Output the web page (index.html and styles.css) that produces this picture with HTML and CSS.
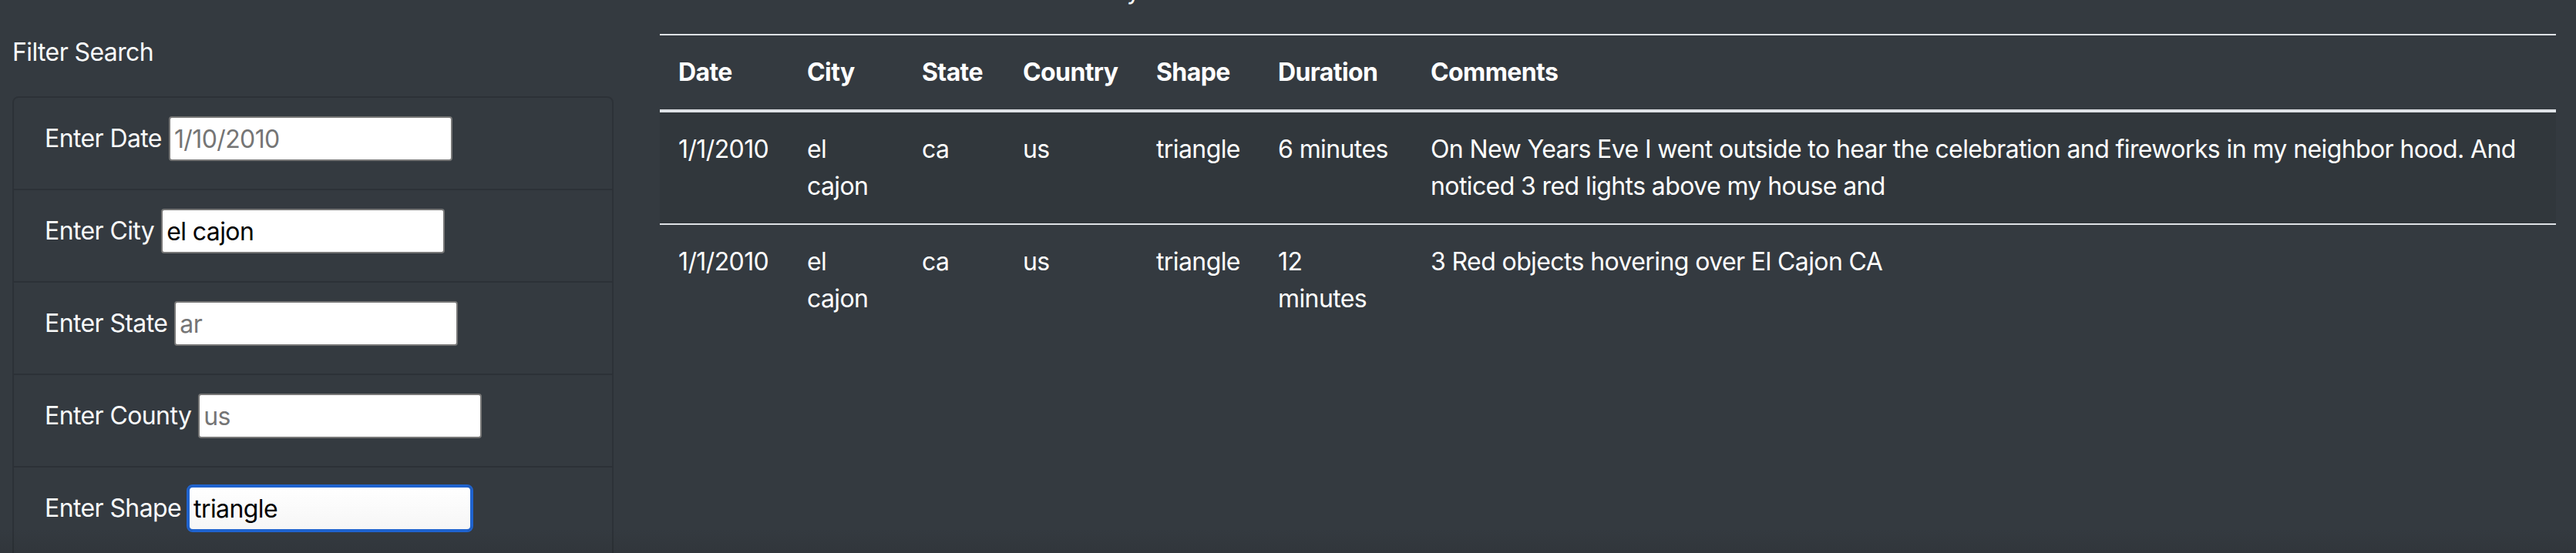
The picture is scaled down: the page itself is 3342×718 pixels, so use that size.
FILE: index.html
```html
<!DOCTYPE html>
<html lang="en">
<head>
<meta charset="utf-8">
<title>UFO Sightings</title>
<link rel="stylesheet" href="styles.css">
</head>
<body>
<div class="page">
  <aside class="filters">
    <div class="filters-title">Filter Search</div>
    <ul class="filter-list">
      <li class="filter-item">
        <label class="filter-row"><span class="filter-label">Enter Date</span><input class="filter-input" type="text" placeholder="1/10/2010"></label>
      </li>
      <li class="filter-item">
        <label class="filter-row"><span class="filter-label">Enter City</span><input class="filter-input" type="text" value="el cajon"></label>
      </li>
      <li class="filter-item">
        <label class="filter-row"><span class="filter-label">Enter State</span><input class="filter-input" type="text" placeholder="ar"></label>
      </li>
      <li class="filter-item">
        <label class="filter-row"><span class="filter-label">Enter County</span><input class="filter-input" type="text" placeholder="us"></label>
      </li>
      <li class="filter-item">
        <label class="filter-row"><span class="filter-label">Enter Shape</span><input class="filter-input is-focused" type="text" value="triangle"></label>
      </li>
    </ul>
  </aside>
  <main class="results">
    <p class="intro">Search the data for any field</p>
    <table class="data-table">
      <colgroup>
        <col class="col-date">
        <col class="col-city">
        <col class="col-state">
        <col class="col-country">
        <col class="col-shape">
        <col class="col-duration">
        <col class="col-comments">
      </colgroup>
      <thead>
        <tr>
          <th>Date</th>
          <th>City</th>
          <th>State</th>
          <th>Country</th>
          <th>Shape</th>
          <th>Duration</th>
          <th>Comments</th>
        </tr>
      </thead>
      <tbody>
        <tr>
          <td>1/1/2010</td>
          <td>el cajon</td>
          <td>ca</td>
          <td>us</td>
          <td>triangle</td>
          <td>6 minutes</td>
          <td>On New Years Eve I went outside to hear the celebration and fireworks in my neighbor hood. And noticed 3 red lights above my house and</td>
        </tr>
        <tr>
          <td>1/1/2010</td>
          <td>el cajon</td>
          <td>ca</td>
          <td>us</td>
          <td>triangle</td>
          <td>12 minutes</td>
          <td>3 Red objects hovering over El Cajon CA</td>
        </tr>
      </tbody>
    </table>
  </main>
</div>
</body>
</html>
```

FILE: styles.css
```css
html {
  height: 100%;
  background: #343a40;
}

body {
  margin: 0;
  min-height: 100%;
  font-family: Inter, "Noto Sans", sans-serif;
  font-size: 32px;
  line-height: 48px;
  letter-spacing: -0.6px;
  color: #fff;
  background: linear-gradient(to bottom, #343a40 0, #343a40 calc(100% - 40px), #30353a 100%);
  overflow: hidden;
}

.page {
  display: flex;
  gap: 60px;
  padding: 44px 26px 0 16px;
}

.filters {
  flex: none;
  width: 780px;
}

.filters-title {
  line-height: 48px;
  margin-bottom: 33px;
  color: #f8f9fa;
}

.filter-list {
  list-style: none;
  margin: 0;
  padding: 0;
  border: 2px solid rgba(0, 0, 0, 0.14);
  border-radius: 8px;
}

.filter-item {
  padding: 24px 40px 36px;
  border-top: 2px solid rgba(0, 0, 0, 0.14);
}

.filter-item:first-child {
  border-top: 0;
}

.filter-row {
  display: flex;
  align-items: center;
  gap: 9px;
  height: 58px;
}

.filter-label {
  color: #f8f9fa;
  white-space: nowrap;
}

.filter-input {
  width: 368px;
  height: 58px;
  box-sizing: border-box;
  margin: 0;
  padding: 0 5px;
  border: 2px solid #767676;
  border-radius: 4px;
  background: #fff;
  color: #000;
  font: inherit;
  letter-spacing: inherit;
  line-height: 48px;
}

.filter-input::placeholder {
  color: #757575;
  opacity: 1;
}

.filter-input.is-focused {
  border-color: #1f63cf;
  outline: 2px solid #1f63cf;
  outline-offset: 0;
  border-radius: 6px;
  background: linear-gradient(#fff, #f6f6f6);
}

.results {
  flex: none;
  width: 2460px;
}

.intro {
  margin: -80px 0 32px 284px;
  color: #f1f3f5;
}

.data-table {
  width: 100%;
  border-collapse: collapse;
  table-layout: fixed;
  color: #fff;
}

.col-date { width: 167px; }
.col-city { width: 149px; }
.col-state { width: 131px; }
.col-country { width: 173px; }
.col-shape { width: 158px; }
.col-duration { width: 198px; }
.col-comments { width: auto; }

.data-table th,
.data-table td {
  padding: 24px;
  text-align: left;
  vertical-align: top;
  border-top: 2px solid #dee2e6;
}

.data-table thead th {
  font-weight: 700;
  border-bottom: 4px solid #dee2e6;
}

.data-table tbody tr:nth-child(odd) {
  background: rgba(0, 0, 0, 0.05);
}
```
